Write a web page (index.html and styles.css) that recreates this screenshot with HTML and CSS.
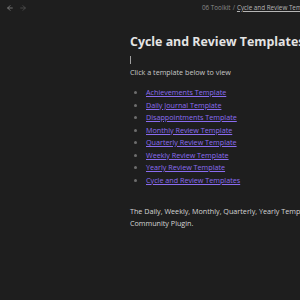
FILE: index.html
```html
<!DOCTYPE html>
<html lang="en">
  <head>
    <meta charset="UTF-8" />
    <meta name="viewport" content="width=device-width, initial-scale=1.0" />
    <title>Cycle and Review Templates</title>
    <link rel="stylesheet" href="styles.css">
  </head>
  <body>
    <div class="header">
      <div class="nav">
        <svg class="arrow" width="8" height="8" viewBox="0 0 24 24"><path d="M19 12H5M12 19l-7-7 7-7" /></svg>
        <svg class="arrow dim" width="8" height="8" viewBox="0 0 24 24"><path d="M5 12h14M12 5l7 7-7 7" /></svg>
      </div>
      <div class="crumbs">
        <span class="folder">06 Toolkit</span>
        <span class="sep">/</span>
        <span class="file">Cycle and Review Templates</span>
      </div>
    </div>

    <div class="page">
      <h1>Cycle and Review Templates</h1>
      <div class="cursor"></div>
      <p class="intro">Click a template below to view</p>
      <ul class="list">
        <li><a href="#">Achievements Template</a></li>
        <li><a href="#">Daily Journal Template</a></li>
        <li><a href="#">Disappointments Template</a></li>
        <li><a href="#">Monthly Review Template</a></li>
        <li><a href="#">Quarterly Review Template</a></li>
        <li><a href="#">Weekly Review Template</a></li>
        <li><a href="#">Yearly Review Template</a></li>
        <li><a href="#">Cycle and Review Templates</a></li>
      </ul>
      <p class="note">The Daily, Weekly, Monthly, Quarterly, Yearly Templates use the Periodic Notes<br>Community Plugin.</p>
    </div>
  </body>
</html>
```

FILE: styles.css
```css
* {
  margin: 0;
  padding: 0;
}
html,
body {
  width: 300px;
  height: 300px;
  overflow: hidden;
}
body {
  background-color: #1e1e1e;
  color: #dadada;
  font-family: "Open Sans", sans-serif;
}

.header {
  height: 15px;
  display: flex;
  align-items: center;
  white-space: nowrap;
}
.nav {
  display: flex;
  gap: 5px;
  padding-left: 6px;
  flex-shrink: 0;
}
.arrow {
  fill: none;
  stroke: #7a7a7a;
  stroke-width: 2.8;
  stroke-linecap: round;
  stroke-linejoin: round;
}
.arrow.dim {
  stroke: #4a4a4a;
}
.crumbs {
  font-size: 6.3px;
  color: #8a8a8a;
  display: flex;
  gap: 2px;
  margin-left: 175px;
  flex-shrink: 0;
}
.crumbs .file {
  color: #b5b5b5;
  text-decoration: underline;
}

.page {
  padding-left: 130px;
  white-space: nowrap;
}
h1 {
  font-size: 12.4px;
  font-weight: 700;
  color: #e4e4e4;
  margin-top: 18px;
  line-height: 18px;
}
.cursor {
  width: 1px;
  height: 8px;
  background-color: #a0a0a0;
  margin-top: 5px;
}
.intro {
  font-size: 7.2px;
  line-height: 12px;
  margin-top: 2px;
  color: #c8c8c8;
}
.list {
  margin-top: 8px;
  padding-left: 16px;
  font-size: 7.2px;
  line-height: 12.5px;
}
.list li::marker {
  color: #6e6e6e;
}
.list a {
  color: #8a6cf0;
}
.note {
  margin-top: 19px;
  font-size: 7.2px;
  line-height: 12.3px;
  color: #d4d4d4;
}
```
